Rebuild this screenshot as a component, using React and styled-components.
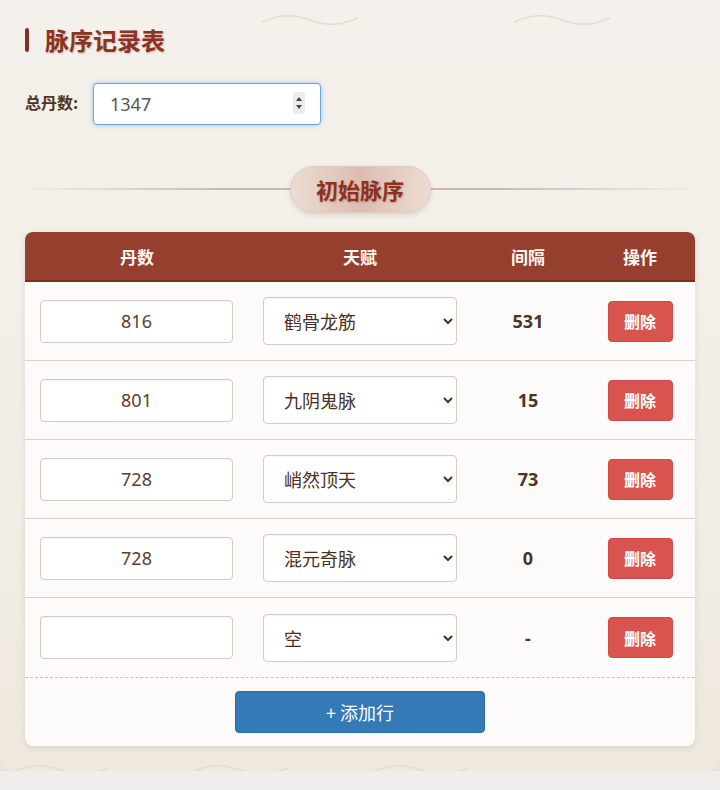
import React from "react";
import styled, { createGlobalStyle } from "styled-components";

const GlobalStyle = createGlobalStyle`
  html, body {
    margin: 0;
    padding: 0;
    background: #efeeec;
  }
  body {
    font-family: "Noto Sans", "Noto Sans CJK SC", sans-serif;
  }
`;

const rows = [
  { dan: "816", talent: "鹤骨龙筋", gap: "531" },
  { dan: "801", talent: "九阴鬼脉", gap: "15" },
  { dan: "728", talent: "峭然顶天", gap: "73" },
  { dan: "728", talent: "混元奇脉", gap: "0" },
  { dan: "", talent: "空", gap: "-" },
];

const talents = ["鹤骨龙筋", "九阴鬼脉", "峭然顶天", "混元奇脉", "空"];

function Wave({ left, top }) {
  return (
    <WaveMark style={{ left, top }} width="100" height="16" viewBox="0 0 100 16">
      <path d="M2 10 C20 2 34 2 50 8 S80 14 98 6" fill="none" stroke="#e4ddd2" strokeWidth="1.5" />
    </WaveMark>
  );
}

export default function App() {
  return (
    <>
      <GlobalStyle />
      <Panel>
        <Wave left={260} top={12} />
        <Wave left={512} top={12} />
        <Wave left={10} top={762} />
        <Wave left={190} top={762} />
        <Wave left={370} top={762} />
        <Title>脉序记录表</Title>
        <TotalRow>
          <TotalLabel>总丹数:</TotalLabel>
          <TotalBox>
            <TotalInput type="text" defaultValue="1347" />
            <Spinner width="12" height="22" viewBox="0 0 12 22">
              <rect width="12" height="22" rx="2" fill="#ececec" />
              <path d="M3 9 L6 5 L9 9 Z" fill="#444" />
              <path d="M3 13 L6 17 L9 13 Z" fill="#444" />
            </Spinner>
          </TotalBox>
        </TotalRow>
        <Divider>
          <Pill>初始脉序</Pill>
        </Divider>
        <Table>
          <HeadRow>
            <HeadCell>丹数</HeadCell>
            <HeadCell>天赋</HeadCell>
            <HeadCell>间隔</HeadCell>
            <HeadCell>操作</HeadCell>
          </HeadRow>
          {rows.map((r, i) => (
            <Row key={i} $last={i === rows.length - 1}>
              <Cell>
                <DanInput type="text" defaultValue={r.dan} />
              </Cell>
              <Cell>
                <TalentSelect defaultValue={r.talent}>
                  {talents.map((t) => (
                    <option key={t} value={t}>
                      {t}
                    </option>
                  ))}
                </TalentSelect>
              </Cell>
              <Cell $center>
                <Gap>{r.gap}</Gap>
              </Cell>
              <Cell $center>
                <DeleteButton>删除</DeleteButton>
              </Cell>
            </Row>
          ))}
          <Footer>
            <AddButton>+ 添加行</AddButton>
          </Footer>
        </Table>
      </Panel>
    </>
  );
}

const Panel = styled.div`
  position: relative;
  box-sizing: border-box;
  width: 720px;
  height: 771px;
  padding: 23px 25px 25px;
  border-radius: 0 0 10px 10px;
  background: linear-gradient(180deg, #f4f1ec 0%, #f2eee7 60%, #eee8de 100%);
  box-shadow: 0 4px 10px rgba(120, 100, 80, 0.18);
  overflow: hidden;
`;

const WaveMark = styled.svg`
  position: absolute;
  pointer-events: none;
`;

const Title = styled.h2`
  position: relative;
  margin: 0;
  height: 34px;
  line-height: 34px;
  padding-left: 20px;
  font-family: "Noto Sans CJK SC", sans-serif;
  font-size: 24px;
  font-weight: 700;
  color: #8b3322;
  text-shadow: 1px 1px 2px rgba(140, 60, 40, 0.3);

  &::before {
    content: "";
    position: absolute;
    left: 0;
    top: 5px;
    width: 4px;
    height: 24px;
    border-radius: 2px;
    background: #7a3420;
  }
`;

const TotalRow = styled.div`
  display: flex;
  align-items: center;
  gap: 10px;
  margin-top: 26px;
`;

const TotalLabel = styled.label`
  font-family: "Noto Sans CJK SC", sans-serif;
  font-size: 16px;
  font-weight: 700;
  color: #4e3422;
  margin-top: -4px;
  width: 58px;
`;

const TotalBox = styled.div`
  position: relative;
  width: 228px;
  height: 42px;
`;

const TotalInput = styled.input`
  box-sizing: border-box;
  width: 100%;
  height: 100%;
  padding: 0 16px;
  border: 1px solid #66a3dd;
  border-radius: 4px;
  background: #fff;
  box-shadow: 0 0 5px rgba(102, 163, 221, 0.55);
  font-family: "Noto Sans", "Noto Sans CJK SC", sans-serif;
  font-size: 18px;
  color: #555;
  outline: none;
`;

const Spinner = styled.svg`
  position: absolute;
  right: 16px;
  top: 9px;
`;

const Divider = styled.div`
  display: flex;
  justify-content: center;
  align-items: center;
  margin: 40px -5px 0;
  height: 48px;
  background: linear-gradient(
      90deg,
      rgba(200, 180, 165, 0) 0%,
      rgba(200, 180, 165, 0.9) 30%,
      rgba(200, 180, 165, 0.9) 70%,
      rgba(200, 180, 165, 0) 100%
    )
    center / 100% 2px no-repeat;
`;

const Pill = styled.div`
  box-sizing: border-box;
  width: 141px;
  height: 47px;
  display: flex;
  align-items: center;
  justify-content: center;
  border-radius: 24px;
  border: 1px solid #dccbc0;
  background: linear-gradient(90deg, #ecdcd3 0%, #dcbdb0 50%, #ecdcd3 100%);
  box-shadow: 0 2px 5px rgba(140, 100, 80, 0.2);
  font-family: "Noto Sans CJK SC", sans-serif;
  font-size: 22px;
  font-weight: 700;
  color: #8b3322;
  text-shadow: 1px 1px 2px rgba(140, 60, 40, 0.3);
`;

const Table = styled.div`
  margin-top: 19px;
  border-radius: 8px;
  overflow: hidden;
  background: #fdfbf9;
  box-shadow: 0 2px 6px rgba(120, 100, 80, 0.15);
`;

const grid = `
  display: grid;
  grid-template-columns: 224px 222px 114px 110px;
`;

const HeadRow = styled.div`
  ${grid}
  height: 50px;
  box-sizing: border-box;
  background: #963f2f;
  border-bottom: 2px solid #7c2e20;
`;

const HeadCell = styled.div`
  display: flex;
  align-items: center;
  justify-content: center;
  font-family: "Noto Sans CJK SC", sans-serif;
  font-size: 17px;
  font-weight: 700;
  color: #fff6ef;
`;

const Row = styled.div`
  ${grid}
  box-sizing: border-box;
  height: 79px;
  border-bottom: ${(p) => (p.$last ? "none" : "1px solid #d9d1c8")};
`;

const Cell = styled.div`
  display: flex;
  align-items: center;
  justify-content: ${(p) => (p.$center ? "center" : "flex-start")};
  padding-left: ${(p) => (p.$center ? "0" : "15px")};
`;

const DanInput = styled.input`
  box-sizing: border-box;
  width: 193px;
  height: 43px;
  border: 1px solid #d3cbc1;
  border-radius: 4px;
  background: #fff;
  box-shadow: inset 0 1px 2px rgba(0, 0, 0, 0.05);
  text-align: center;
  font-family: "Noto Sans", "Noto Sans CJK SC", sans-serif;
  font-size: 18px;
  color: #5a4030;
  outline: none;
`;

const TalentSelect = styled.select`
  box-sizing: border-box;
  width: 194px;
  height: 48px;
  margin-left: -1px;
  padding: 0 6px 0 16px;
  border: 1px solid #d3cbc1;
  border-radius: 4px;
  background: #fff;
  box-shadow: inset 0 1px 2px rgba(0, 0, 0, 0.05);
  font-family: "Noto Sans CJK SC", sans-serif;
  font-size: 18px;
  color: #4a3222;
  outline: none;
`;

const Gap = styled.span`
  font-family: "Noto Sans", "Noto Sans CJK SC", sans-serif;
  font-size: 18px;
  font-weight: 700;
  color: #4e3422;
`;

const DeleteButton = styled.button`
  width: 65px;
  height: 41px;
  border: 1px solid #cf4a45;
  border-radius: 4px;
  background: #d9534f;
  font-family: "Noto Sans CJK SC", sans-serif;
  font-size: 16px;
  font-weight: 700;
  color: #fff;
  cursor: pointer;
`;

const Footer = styled.div`
  display: flex;
  justify-content: center;
  box-sizing: border-box;
  height: 69px;
  padding-top: 13px;
  border-top: 1px dashed #c9c1b8;
`;

const AddButton = styled.button`
  width: 250px;
  height: 42px;
  border: 1px solid #2e6da4;
  border-radius: 4px;
  background: #337ab7;
  font-family: "Noto Sans CJK SC", sans-serif;
  font-size: 18px;
  color: #fff;
  cursor: pointer;
`;
